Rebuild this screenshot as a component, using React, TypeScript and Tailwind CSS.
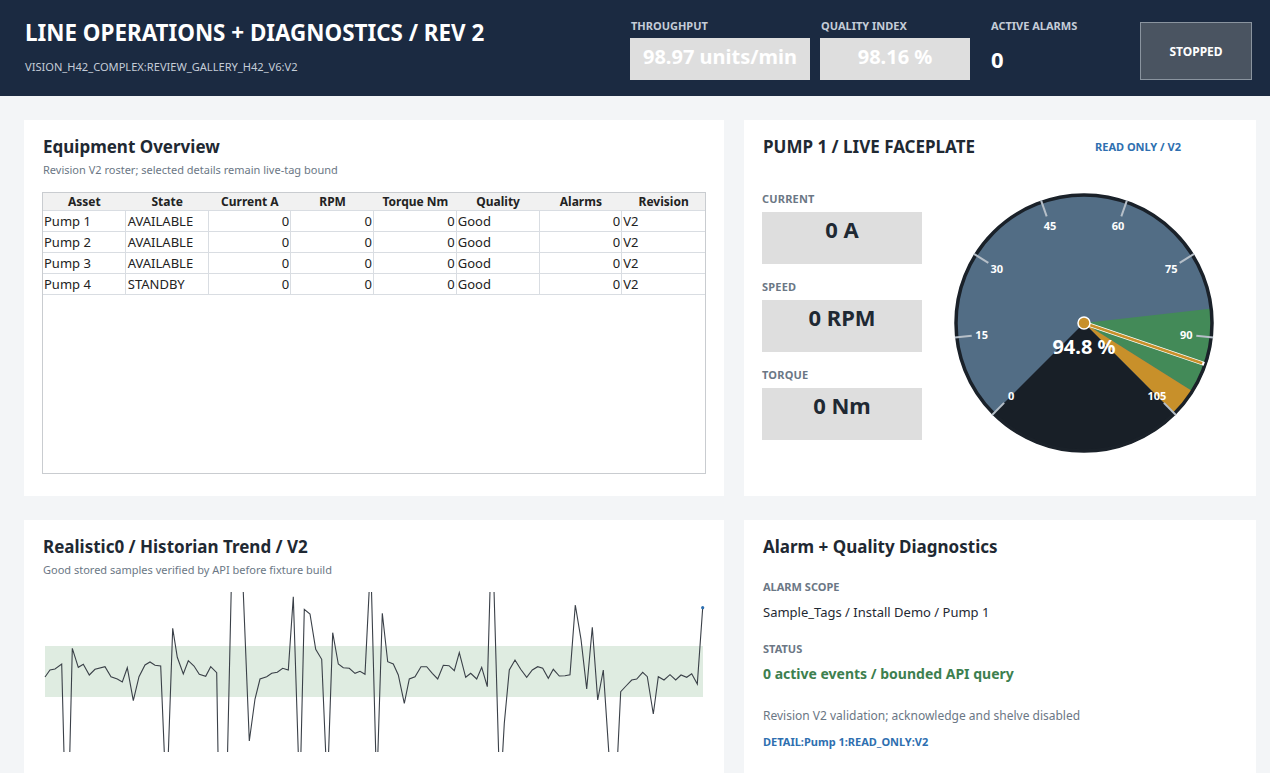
import React from 'react';

const rows = [
  { asset: 'Pump 1', state: 'AVAILABLE' },
  { asset: 'Pump 2', state: 'AVAILABLE' },
  { asset: 'Pump 3', state: 'AVAILABLE' },
  { asset: 'Pump 4', state: 'STANDBY' },
];

const columns = ['Asset', 'State', 'Current A', 'RPM', 'Torque Nm', 'Quality', 'Alarms', 'Revision'];

// trend samples in page coordinates (viewBox matches the page)
const trend: [number, number][] = [
  [45, 677], [50, 670], [55, 669], [61.7, 664], [67, 870], [72.3, 648.3], [78.3, 667.3], [83.3, 664.3],
  [89.3, 675], [95, 669.3], [105, 666.7], [111, 676.7], [117.3, 679], [122.3, 682], [127.3, 667.7],
  [133.3, 700.7], [139, 676.7], [145, 665], [150, 662], [155, 665.3], [160.7, 666], [166.5, 805],
  [172.7, 628.3], [177.3, 657.3], [183.3, 674], [188.3, 660.7], [194, 666], [199.3, 674.3], [205.7, 676.3],
  [210.7, 666.7], [216.7, 672.7], [222, 1000], [235.5, 400], [249.3, 741], [255, 699], [260, 679],
  [266.7, 676.7], [271.7, 673.3], [277.3, 672.3], [282.7, 668.3], [288.3, 670], [293.3, 596.7],
  [299.8, 800], [304.3, 609.3], [310, 614], [315.7, 649.3], [321.7, 659.3], [327.3, 790], [332.7, 632.7],
  [338.3, 664], [343.3, 667.7], [349.3, 668.3], [355, 673.3], [360, 671.3], [365, 674.3], [370.7, 560],
  [376.7, 790], [382.3, 613.3], [387.7, 661.7], [393.3, 664], [398.3, 675], [404.3, 703.3], [409.3, 679],
  [415, 676.7], [421, 666.7], [426.7, 666.7], [432.3, 673.3], [437.7, 679], [443.3, 665.3], [449, 665.7],
  [454.3, 670.7], [459.3, 652.7], [465.7, 677.3], [470.7, 673.3], [476.7, 679], [481.7, 667.3],
  [487.3, 686.7], [492, 520], [500, 800], [504.3, 723.3], [509.3, 670], [515, 660], [520.7, 669.3],
  [526.7, 677.3], [532.3, 670], [537.7, 666.7], [542.7, 668.3], [548.3, 678.3], [553.3, 669.3],
  [559.3, 676], [565, 675.7], [570, 674.7], [575.3, 605], [581, 639.3], [586.7, 689], [592.3, 627.3],
  [597.7, 700], [603.3, 670], [614, 830], [620.7, 691.7], [626, 686], [631.7, 680], [636.7, 679],
  [642.7, 672.3], [647.3, 676.7], [653.3, 714], [658.3, 676.7], [664, 680], [670, 674.7], [675.7, 680],
  [681, 675], [686.7, 677.3], [691.7, 673.7], [697.3, 684], [702.7, 607.7],
];

const CX = 132;
const CY = 131;
const toAngle = (v: number) => 225 + (v * 270) / 105;
const pt = (deg: number, r: number) => {
  const a = (deg * Math.PI) / 180;
  return [CX + r * Math.sin(a), CY - r * Math.cos(a)];
};
const wedge = (a1: number, a2: number, r: number) => {
  const [x1, y1] = pt(a1, r);
  const [x2, y2] = pt(a2, r);
  const large = a2 - a1 > 180 ? 1 : 0;
  return `M ${CX} ${CY} L ${x1} ${y1} A ${r} ${r} 0 ${large} 1 ${x2} ${y2} Z`;
};

const Gauge = () => {
  const ticks = [0, 15, 30, 45, 60, 75, 90, 105];
  const [nx, ny] = pt(toAngle(94.8), 127);
  return (
    <svg width="266" height="266" viewBox="0 0 266 266" className="ml-[30px] shrink-0">
      <circle cx={CX} cy={CY} r={129} fill="#526d85" />
      <path d={wedge(toAngle(85), toAngle(100), 129)} fill="#438a58" />
      <path d={wedge(toAngle(100), toAngle(105), 129)} fill="#c8902a" />
      <path d={wedge(135, 225, 129)} fill="#181f27" />
      <circle cx={CX} cy={CY} r={128} fill="none" stroke="#1a2129" strokeWidth={3.5} />
      {ticks.map((t) => {
        const [x1, y1] = pt(toAngle(t), 113);
        const [x2, y2] = pt(toAngle(t), 130);
        const [lx, ly] = pt(toAngle(t), 103);
        return (
          <g key={t}>
            <line x1={x1} y1={y1} x2={x2} y2={y2} stroke="#b6bfc8" strokeWidth={2} />
            <text x={lx} y={ly} fill="#ffffff" fontSize="11" fontWeight="700" textAnchor="middle" dominantBaseline="central">
              {t}
            </text>
          </g>
        );
      })}
      <line x1={CX} y1={CY} x2={nx} y2={ny} stroke="#ffffff" strokeWidth={4} />
      <line x1={CX} y1={CY} x2={nx - 2} y2={ny - 0.6} stroke="#c8902a" strokeWidth={2.5} />
      <circle cx={CX} cy={CY} r={6} fill="#c8902a" stroke="#ffffff" strokeWidth={1.5} />
      <text x={CX} y={CY + 23} fill="#ffffff" fontSize="20" fontWeight="700" textAnchor="middle" dominantBaseline="central">
        94.8 %
      </text>
    </svg>
  );
};

const Trend = () => (
  <svg width="664" height="170" viewBox="42 588 664 170" className="mt-[11px] block">
    <defs>
      <clipPath id="plot">
        <rect x="42" y="592" width="664" height="160" />
      </clipPath>
    </defs>
    <rect x="45" y="646" width="658" height="51" fill="#dfece1" />
    <polyline
      points={trend.map(([x, y]) => `${x},${y}`).join(' ')}
      fill="none"
      stroke="#3a4048"
      strokeWidth={1.1}
      clipPath="url(#plot)"
    />
    <circle cx={702.7} cy={607.7} r={1.6} fill="#2e6fb0" />
  </svg>
);

const FaceplateValue = ({ label, value, first }: { label: string; value: string; first?: boolean }) => (
  <div className={first ? '' : 'mt-[16px]'}>
    <div className="text-[11px] leading-[14px] font-bold text-[#6b7785] tracking-[0.2px]">{label}</div>
    <div className="mt-[6px] h-[52px] w-[160px] bg-[#dedede] pt-[3px] text-center text-[22px] leading-[28px] font-bold text-[#1f2933]">
      {value}
    </div>
  </div>
);

export default function App() {
  return (
    <div className="min-h-screen bg-[#f3f5f7] font-['Noto_Sans',sans-serif] text-[#1f2933]">
      <header className="flex h-[96px] bg-[#1b2a41] pl-[25px] pr-[18px]">
        <div className="pt-[18px]">
          <h1 className="text-[22.4px] leading-[30px] font-bold text-white">LINE OPERATIONS + DIAGNOSTICS / REV 2</h1>
          <div className="mt-[12px] text-[11.1px] leading-[14px] text-[#c5cdd8]">VISION_H42_COMPLEX:REVIEW_GALLERY_H42_V6:V2</div>
        </div>
        <div className="ml-auto flex items-start pt-[18px]">
          <div className="w-[180px]">
            <div className="pl-[1px] text-[11px] leading-[15px] font-bold text-[#c5cdd8]">THROUGHPUT</div>
            <div className="mt-[5px] flex h-[42px] items-center justify-center bg-[#dedede] pb-[4px] text-[20px] font-bold text-white">
              98.97 units/min
            </div>
          </div>
          <div className="ml-[10px] w-[150px]">
            <div className="pl-[1px] text-[11px] leading-[15px] font-bold text-[#c5cdd8]">QUALITY INDEX</div>
            <div className="mt-[5px] flex h-[42px] items-center justify-center bg-[#dedede] pb-[4px] text-[20px] font-bold text-white">
              98.16 %
            </div>
          </div>
          <div className="ml-[21px] w-[149px]">
            <div className="text-[11px] leading-[15px] font-bold text-[#c5cdd8]">ACTIVE ALARMS</div>
            <div className="mt-[11px] text-[22px] leading-[30px] font-bold text-white">0</div>
          </div>
          <button className="mt-[4px] flex h-[58px] w-[112px] items-center justify-center border border-[#8a949f] bg-[#4a5461] pt-[2px] text-[12px] font-bold text-white">
            STOPPED
          </button>
        </div>
      </header>

      <main className="grid grid-cols-[700px_512px] gap-x-[20px] gap-y-[24px] pl-[24px] pt-[24px]">
        <section className="h-[376px] bg-white px-[18px] pt-[15px]">
          <h2 className="pl-[1px] text-[17px] leading-[24px] font-bold">Equipment Overview</h2>
          <p className="mt-[3px] pl-[1px] text-[11px] leading-[15px] text-[#6b7785]">Revision V2 roster; selected details remain live-tag bound</p>
          <div className="mt-[15px] h-[282px] w-[664px] border border-[#c9ccd0]">
            <div className="grid h-[18px] grid-cols-8 border-b border-[#d9dde2] bg-[#f1f1f1]">
              {columns.map((c) => (
                <div key={c} className="text-center text-[12px] leading-[18px] font-bold text-[#222]">
                  {c}
                </div>
              ))}
            </div>
            {rows.map((r) => (
              <div key={r.asset} className="grid h-[21px] grid-cols-8 border-b border-[#d9dde2] text-[13px] leading-[20px] text-[#222]">
                <div className="border-r border-[#d9dde2] pl-[1px]">{r.asset}</div>
                <div className="border-r border-[#d9dde2] pl-[2px]">{r.state}</div>
                <div className="border-r border-[#d9dde2] pr-[1px] text-right">0</div>
                <div className="border-r border-[#d9dde2] pr-[1px] text-right">0</div>
                <div className="border-r border-[#d9dde2] pr-[1px] text-right">0</div>
                <div className="border-r border-[#d9dde2] pl-[1px]">Good</div>
                <div className="border-r border-[#d9dde2] pr-[1px] text-right">0</div>
                <div className="pl-[1px]">V2</div>
              </div>
            ))}
          </div>
        </section>

        <section className="h-[376px] bg-white px-[18px] pt-[15px]">
          <div className="flex items-center">
            <h2 className="w-[333px] pl-[1px] text-[17px] leading-[24px] font-bold">PUMP 1 / LIVE FACEPLATE</h2>
            <span className="text-[11px] font-bold text-[#2e6fb0]">READ ONLY / V2</span>
          </div>
          <div className="mt-[33px] flex items-start">
            <div className="w-[160px]">
              <FaceplateValue label="CURRENT" value="0 A" first />
              <FaceplateValue label="SPEED" value="0 RPM" />
              <FaceplateValue label="TORQUE" value="0 Nm" />
            </div>
            <Gauge />
          </div>
        </section>

        <section className="h-[280px] bg-white px-[18px] pt-[15px]">
          <h2 className="pl-[1px] text-[17px] leading-[24px] font-bold">Realistic0 / Historian Trend / V2</h2>
          <p className="mt-[3px] pl-[1px] text-[11px] leading-[15px] text-[#6b7785]">Good stored samples verified by API before fixture build</p>
          <Trend />
        </section>

        <section className="h-[280px] bg-white px-[18px] pt-[15px]">
          <h2 className="pl-[1px] text-[17px] leading-[24px] font-bold">Alarm + Quality Diagnostics</h2>
          <div className="mt-[21px] pl-[1px] text-[11px] leading-[14px] font-bold text-[#6b7785]">ALARM SCOPE</div>
          <div className="mt-[9px] pl-[1px] text-[13px] leading-[18px]">Sample_Tags / Install Demo / Pump 1</div>
          <div className="mt-[21px] pl-[1px] text-[11px] leading-[14px] font-bold text-[#6b7785]">STATUS</div>
          <div className="mt-[8px] pl-[1px] text-[14px] leading-[20px] font-bold text-[#3d7f4f]">0 active events / bounded API query</div>
          <div className="mt-[24px] pl-[1px] text-[12px] leading-[16px] text-[#6b7785]">Revision V2 validation; acknowledge and shelve disabled</div>
          <div className="mt-[11px] pl-[1px] text-[11px] leading-[14px] font-bold text-[#2e6fb0]">DETAIL:Pump 1:READ_ONLY:V2</div>
        </section>
      </main>
    </div>
  );
}
